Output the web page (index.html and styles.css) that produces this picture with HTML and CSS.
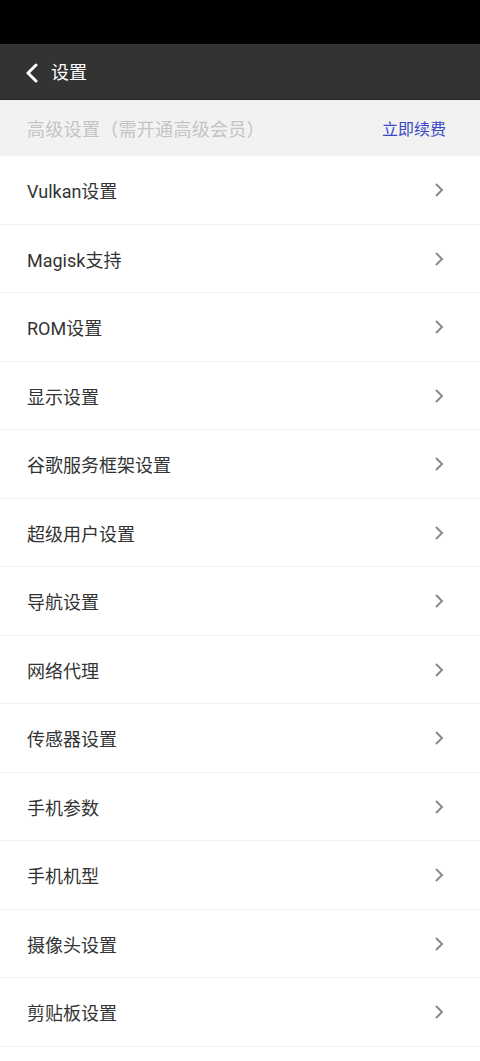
FILE: index.html
```html
<!DOCTYPE html>
<html lang="zh">
<head>
<meta charset="utf-8">
<link rel="stylesheet" href="styles.css">
</head>
<body>
<div class="statusbar"></div>
<header class="appbar">
  <svg class="back" width="14" height="20" viewBox="0 0 14 20"><path d="M11 2 L3 10 L11 18" fill="none" stroke="#fff" stroke-width="3" stroke-linecap="round" stroke-linejoin="round"/></svg>
  <span class="title">设置</span>
</header>
<div class="section">
  <span class="section-label">高级设置（需开通高级会员）</span>
  <span class="section-link">立即续费</span>
</div>
<ul class="list">
  <li class="row"><span>Vulkan设置</span><svg class="chev" width="10" height="16" viewBox="0 0 10 16"><path d="M2 2 L8 8 L2 14" fill="none" stroke="#8a8a8a" stroke-width="2"/></svg></li>
  <li class="row"><span>Magisk支持</span><svg class="chev" width="10" height="16" viewBox="0 0 10 16"><path d="M2 2 L8 8 L2 14" fill="none" stroke="#8a8a8a" stroke-width="2"/></svg></li>
  <li class="row"><span>ROM设置</span><svg class="chev" width="10" height="16" viewBox="0 0 10 16"><path d="M2 2 L8 8 L2 14" fill="none" stroke="#8a8a8a" stroke-width="2"/></svg></li>
  <li class="row"><span>显示设置</span><svg class="chev" width="10" height="16" viewBox="0 0 10 16"><path d="M2 2 L8 8 L2 14" fill="none" stroke="#8a8a8a" stroke-width="2"/></svg></li>
  <li class="row"><span>谷歌服务框架设置</span><svg class="chev" width="10" height="16" viewBox="0 0 10 16"><path d="M2 2 L8 8 L2 14" fill="none" stroke="#8a8a8a" stroke-width="2"/></svg></li>
  <li class="row"><span>超级用户设置</span><svg class="chev" width="10" height="16" viewBox="0 0 10 16"><path d="M2 2 L8 8 L2 14" fill="none" stroke="#8a8a8a" stroke-width="2"/></svg></li>
  <li class="row"><span>导航设置</span><svg class="chev" width="10" height="16" viewBox="0 0 10 16"><path d="M2 2 L8 8 L2 14" fill="none" stroke="#8a8a8a" stroke-width="2"/></svg></li>
  <li class="row"><span>网络代理</span><svg class="chev" width="10" height="16" viewBox="0 0 10 16"><path d="M2 2 L8 8 L2 14" fill="none" stroke="#8a8a8a" stroke-width="2"/></svg></li>
  <li class="row"><span>传感器设置</span><svg class="chev" width="10" height="16" viewBox="0 0 10 16"><path d="M2 2 L8 8 L2 14" fill="none" stroke="#8a8a8a" stroke-width="2"/></svg></li>
  <li class="row"><span>手机参数</span><svg class="chev" width="10" height="16" viewBox="0 0 10 16"><path d="M2 2 L8 8 L2 14" fill="none" stroke="#8a8a8a" stroke-width="2"/></svg></li>
  <li class="row"><span>手机机型</span><svg class="chev" width="10" height="16" viewBox="0 0 10 16"><path d="M2 2 L8 8 L2 14" fill="none" stroke="#8a8a8a" stroke-width="2"/></svg></li>
  <li class="row"><span>摄像头设置</span><svg class="chev" width="10" height="16" viewBox="0 0 10 16"><path d="M2 2 L8 8 L2 14" fill="none" stroke="#8a8a8a" stroke-width="2"/></svg></li>
  <li class="row"><span>剪贴板设置</span><svg class="chev" width="10" height="16" viewBox="0 0 10 16"><path d="M2 2 L8 8 L2 14" fill="none" stroke="#8a8a8a" stroke-width="2"/></svg></li>
</ul>
</body>
</html>
```
FILE: styles.css
```css
* { box-sizing: border-box; }
html, body { margin: 0; padding: 0; background: #fff; }
body {
  font-family: "Roboto", "Noto Sans CJK SC", sans-serif;
  width: 480px;
  overflow: hidden;
}
.statusbar { height: 44px; background: #000; }
.appbar {
  height: 56px;
  background: #333333;
  border-bottom: 1px solid #262626;
  display: flex;
  align-items: center;
  padding-left: 25px;
  gap: 12px;
}
.back { display: block; margin-top: 2px; }
.title { color: #fff; font-size: 18px; line-height: 1; margin-top: 3px; }
.section {
  height: 56px;
  background: #f2f2f2;
  display: flex;
  align-items: center;
  justify-content: space-between;
  padding: 0 34px 0 27px;
}
.section-label { color: #c4c4c4; font-size: 18px; letter-spacing: 0.3px; }
.section-link { color: #3a48c8; font-size: 16px; }
.list { list-style: none; margin: 0; padding: 0; }
.row {
  height: 68.5px;
  border-bottom: 1px solid #f1f1f1;
  display: flex;
  align-items: center;
  justify-content: space-between;
  padding: 1px 36px 0 27px;
  color: #333;
  font-size: 18px;
}
.chev { display: block; }
```
